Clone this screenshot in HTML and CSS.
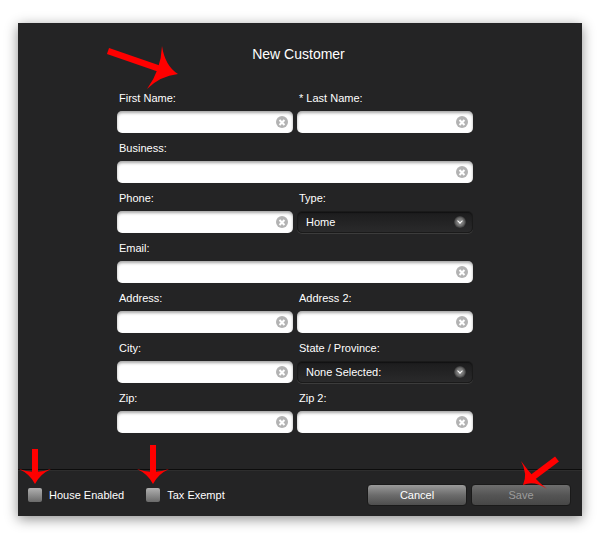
FILE: index.html
```html
<!DOCTYPE html>
<html>
<head>
<meta charset="utf-8">
<link rel="stylesheet" href="styles.css">
</head>
<body>
<div class="dialog">
  <h1 class="title">New Customer</h1>
  <form class="form">
    <div class="field"><label>First Name:</label><div class="input"><span class="clear"></span></div></div>
    <div class="field"><label>* Last Name:</label><div class="input"><span class="clear"></span></div></div>
    <div class="field wide"><label>Business:</label><div class="input"><span class="clear"></span></div></div>
    <div class="field"><label>Phone:</label><div class="input"><span class="clear"></span></div></div>
    <div class="field"><label>Type:</label><div class="select"><span>Home</span><span class="chev"></span></div></div>
    <div class="field wide"><label>Email:</label><div class="input"><span class="clear"></span></div></div>
    <div class="field"><label>Address:</label><div class="input"><span class="clear"></span></div></div>
    <div class="field"><label>Address 2:</label><div class="input"><span class="clear"></span></div></div>
    <div class="field"><label>City:</label><div class="input"><span class="clear"></span></div></div>
    <div class="field"><label>State / Province:</label><div class="select"><span>None Selected:</span><span class="chev"></span></div></div>
    <div class="field"><label>Zip:</label><div class="input"><span class="clear"></span></div></div>
    <div class="field"><label>Zip 2:</label><div class="input"><span class="clear"></span></div></div>
  </form>
  <div class="footer">
    <div class="check"><span class="box"></span><span>House Enabled</span></div>
    <div class="check"><span class="box"></span><span>Tax Exempt</span></div>
    <div class="buttons">
      <button class="btn" type="button">Cancel</button>
      <button class="btn disabled" type="button">Save</button>
    </div>
  </div>
</div>
<svg class="arrows" width="602" height="533" viewBox="0 0 602 533">
  <g fill="#ff0000" stroke="none">
    <line x1="108" y1="51" x2="163" y2="70" stroke="#ff0000" stroke-width="6.5"/>
    <path d="M162,46 Q165,66 178,74 Q160,76 147,89 Q161,70 162,46 Z"/>
    <rect x="32" y="449" width="6" height="24"/>
    <path d="M19,469 Q30,474 35,484 Q40,474 51,469 Q35,475 19,469 Z"/>
    <rect x="150" y="445" width="6" height="28"/>
    <path d="M137,469 Q148,474 153,484 Q158,474 169,469 Q153,475 137,469 Z"/>
    <line x1="557" y1="459" x2="533" y2="477" stroke="#ff0000" stroke-width="6.5"/>
    <path d="M521,461 Q528,474 523,485 Q534,480 547,489 Q533,478 521,461 Z"/>
  </g>
</svg>
</body>
</html>
```
FILE: styles.css
```css
* { box-sizing: border-box; }
html, body { margin: 0; padding: 0; background: #ffffff; }
body {
  width: 602px;
  height: 533px;
  position: relative;
  overflow: hidden;
  font-family: "Liberation Sans", Arial, sans-serif;
}
.dialog {
  margin: 23px 0 0 18px;
  width: 564px;
  height: 493px;
  background: #242425;
  box-shadow: 0 3px 12px rgba(0, 0, 0, 0.45);
  display: flex;
  flex-direction: column;
}
.title {
  margin: 23px 0 0 0;
  font-size: 14px;
  line-height: 16px;
  font-weight: normal;
  color: #ffffff;
  text-align: center;
  padding-right: 3px;
}
.form {
  margin: 30px 0 0 99px;
  width: 356px;
  display: grid;
  grid-template-columns: 176px 176px;
  column-gap: 4px;
  row-gap: 9px;
}
.field { display: flex; flex-direction: column; }
.field.wide { grid-column: 1 / span 2; }
.field label {
  color: #ffffff;
  font-size: 11px;
  line-height: 13px;
  padding-left: 2px;
  margin-bottom: 6px;
}
.input {
  height: 22px;
  background: #ffffff;
  border-radius: 5px;
  box-shadow: inset 0 2px 3px rgba(0, 0, 0, 0.35);
  display: flex;
  align-items: center;
  justify-content: flex-end;
  padding-right: 5px;
}
.clear {
  width: 12px;
  height: 12px;
  border-radius: 50%;
  background: #b3b3b3;
  position: relative;
}
.clear::before, .clear::after {
  content: "";
  position: absolute;
  left: 5px;
  top: 2.5px;
  width: 2px;
  height: 7px;
  background: #ffffff;
  transform: rotate(45deg);
}
.clear::after { transform: rotate(-45deg); }
.select {
  height: 22px;
  border-radius: 5px;
  background: linear-gradient(#1c1c1d, #2a2a2b);
  border: 1px solid #1a1a1a;
  box-shadow: 0 1px 0 #3c3c3c, inset 0 1px 1px rgba(0,0,0,0.4);
  display: flex;
  align-items: center;
  justify-content: space-between;
  padding: 0 6px 0 8px;
  color: #ffffff;
  font-size: 11px;
}
.chev {
  width: 12px;
  height: 12px;
  border-radius: 50%;
  background: radial-gradient(circle, #9a9a9a 0%, #6e6e6e 45%, rgba(70,70,70,0.3) 75%, rgba(40,40,40,0) 100%);
  position: relative;
}
.chev::after {
  content: "";
  position: absolute;
  left: 4px;
  top: 2.5px;
  width: 3px;
  height: 3px;
  border-right: 1.5px solid #ffffff;
  border-bottom: 1.5px solid #ffffff;
  transform: rotate(45deg);
}
.footer {
  margin-top: auto;
  border-top: 1px solid #0c0c0c;
  box-shadow: inset 0 1px 0 #2e2e2e;
  height: 47px;
  padding: 14px 11px 0 10px;
  display: flex;
  align-items: flex-start;
}
.check {
  height: 22px;
  display: flex;
  align-items: center;
  gap: 7px;
  color: #ffffff;
  font-size: 11px;
  margin-right: 22px;
}
.box {
  width: 14px;
  height: 14px;
  border-radius: 2px;
  background: linear-gradient(#b0b0b0, #6a6a6a);
}
.buttons { margin-left: auto; display: flex; gap: 4px; }
.btn {
  width: 100px;
  height: 22px;
  border-radius: 4px;
  border: 1px solid #1a1a1a;
  background: linear-gradient(#9a9a9a, #6c6c6c 50%, #4e4e4e);
  color: #ffffff;
  font-family: "Liberation Sans", Arial, sans-serif;
  font-size: 11px;
  padding: 0;
}
.btn.disabled {
  background: linear-gradient(#6e6e6e, #555555 50%, #474747);
  color: #9c9c9c;
}
.arrows {
  position: absolute;
  left: 0;
  top: 0;
  pointer-events: none;
}
```
